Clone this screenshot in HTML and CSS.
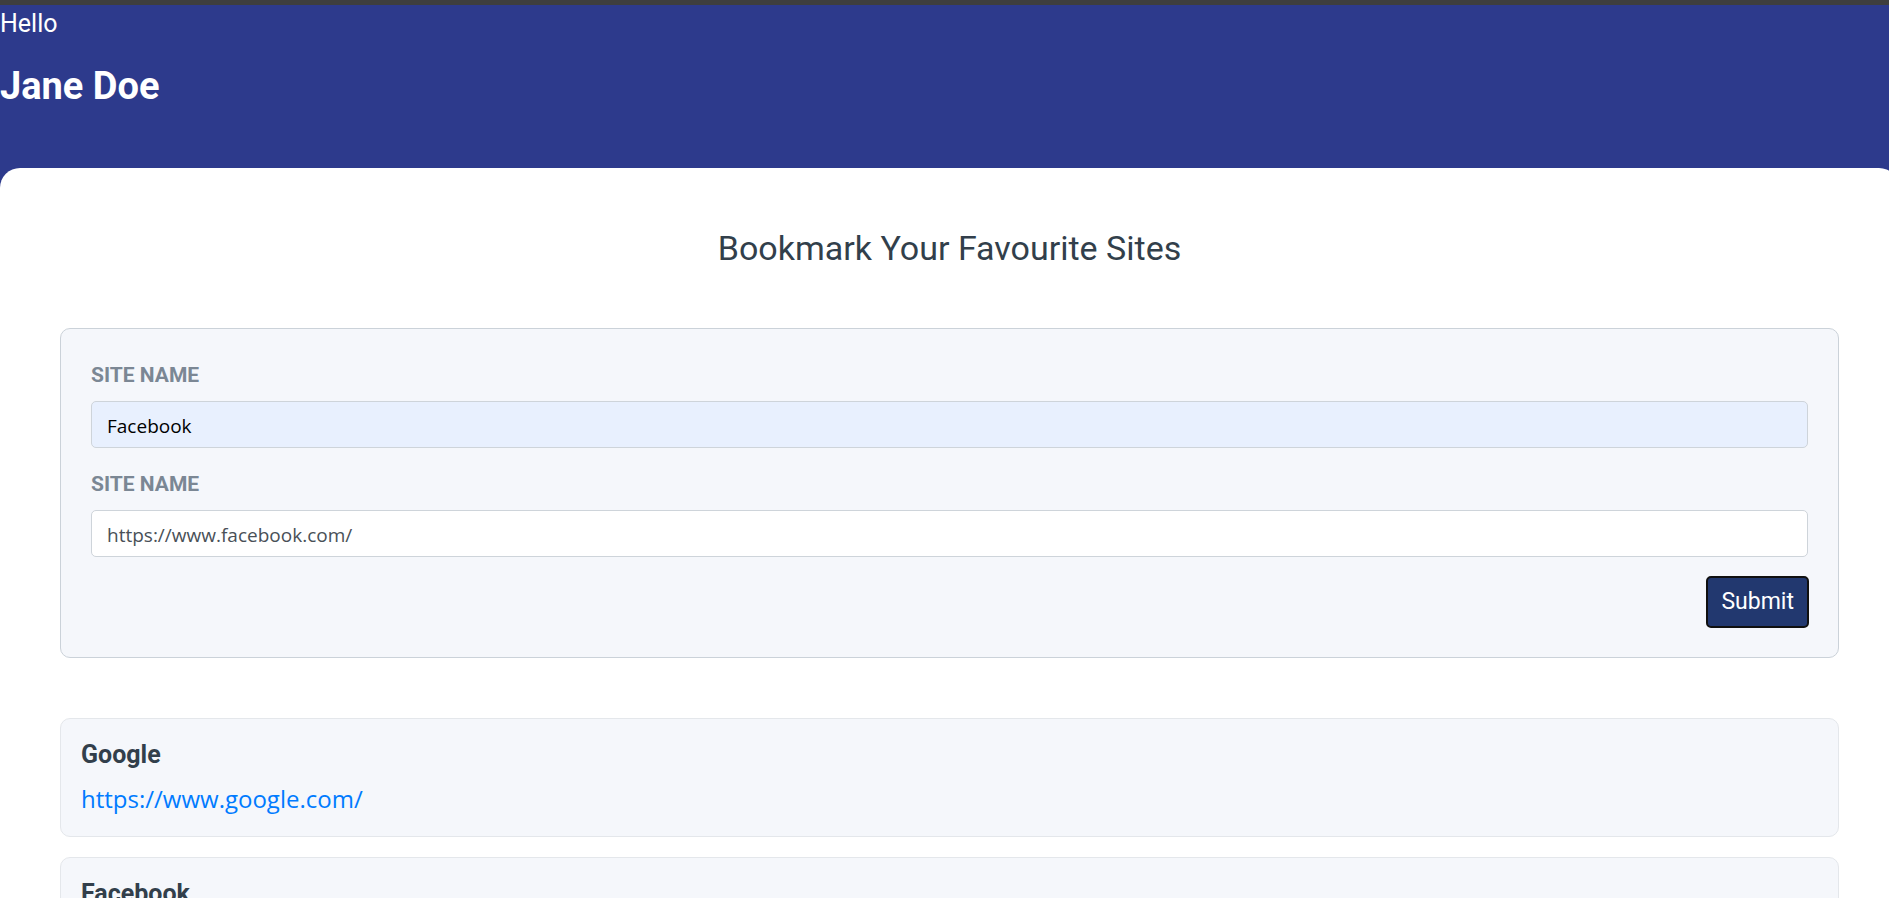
FILE: index.html
```
<!DOCTYPE html>
<html lang="en">
<head>
<meta charset="utf-8">
<title>Bookmark Your Favourite Sites</title>
<link rel="stylesheet" href="styles.css">
</head>
<body>
<header class="header">
  <p class="greeting">Hello</p>
  <h1 class="user-name">Jane Doe</h1>
</header>
<main class="panel">
  <h2 class="title">Bookmark Your Favourite Sites</h2>
  <form class="form">
    <div class="field">
      <label class="label" for="site-name">SITE NAME</label>
      <input class="input input-filled" id="site-name" type="text" value="Facebook">
    </div>
    <div class="field">
      <label class="label" for="site-url">SITE NAME</label>
      <input class="input" id="site-url" type="text" value="https://www.facebook.com/">
    </div>
    <button class="submit" type="button">Submit</button>
  </form>
  <section class="bookmarks">
    <article class="card">
      <h3 class="card-title">Google</h3>
      <a class="card-link" href="https://www.google.com/">https://www.google.com/</a>
    </article>
    <article class="card">
      <h3 class="card-title">Facebook</h3>
      <a class="card-link" href="https://www.facebook.com/">https://www.facebook.com/</a>
    </article>
  </section>
</main>
</body>
</html>
```
FILE: styles.css
```
* { box-sizing: border-box; }
html {
  overflow-x: hidden;
  scrollbar-width: none;
}
body {
  margin: 0;
  border-top: 5px solid #3e3e3e;
  background: #2d3a8c;
  font-family: Roboto, sans-serif;
  color: #323f4b;
}
.header {
  padding-bottom: 58px;
  color: #fff;
}
.greeting {
  margin: 0;
  font-size: 25px;
  line-height: 38px;
}
.user-name {
  margin: 20px 0 0;
  font-size: 38px;
  line-height: 47px;
  font-weight: 700;
}
.panel {
  margin-right: -10px;
  padding: 60px;
  border-radius: 20px 20px 0 0;
  background: #fff;
}
.title {
  margin: 0 0 60px;
  font-size: 34px;
  line-height: 40px;
  font-weight: 400;
  text-align: center;
}
.form {
  display: flex;
  flex-direction: column;
  gap: 20px;
  padding: 30px;
  border: 1px solid #cbd2d9;
  border-radius: 10px;
  background: #f5f7fb;
}
.field {
  display: flex;
  flex-direction: column;
  gap: 10px;
}
.label {
  font-size: 21px;
  line-height: 32px;
  font-weight: 700;
  color: #7b8794;
}
.input {
  width: 100%;
  height: 47px;
  padding: 2px 15px 0;
  border: 1px solid #ced4da;
  border-radius: 5px;
  background: #fff;
  font: 400 19px "Open Sans", sans-serif;
  color: #495057;
}
.input-filled {
  background: #e8f0fe;
  color: #000;
}
.submit {
  align-self: flex-end;
  padding: 5px 14px;
  border: 0;
  border-radius: 4px;
  outline: 2px solid #101010;
  outline-offset: -1px;
  background: #22386f;
  color: #fff;
  font: 400 23px/40px Roboto, sans-serif;
}
.bookmarks {
  display: flex;
  flex-direction: column;
  gap: 20px;
  margin-top: 60px;
}
.card {
  padding: 20px;
  border: 1px solid #e4e7eb;
  border-radius: 10px;
  background: #f5f7fb;
}
.card-title {
  margin: 0 0 10px;
  font-size: 25px;
  line-height: 32px;
  font-weight: 700;
}
.card-link {
  display: block;
  width: fit-content;
  font: 400 24px/35px "Open Sans", sans-serif;
  color: #007bff;
  text-decoration: none;
}
```
